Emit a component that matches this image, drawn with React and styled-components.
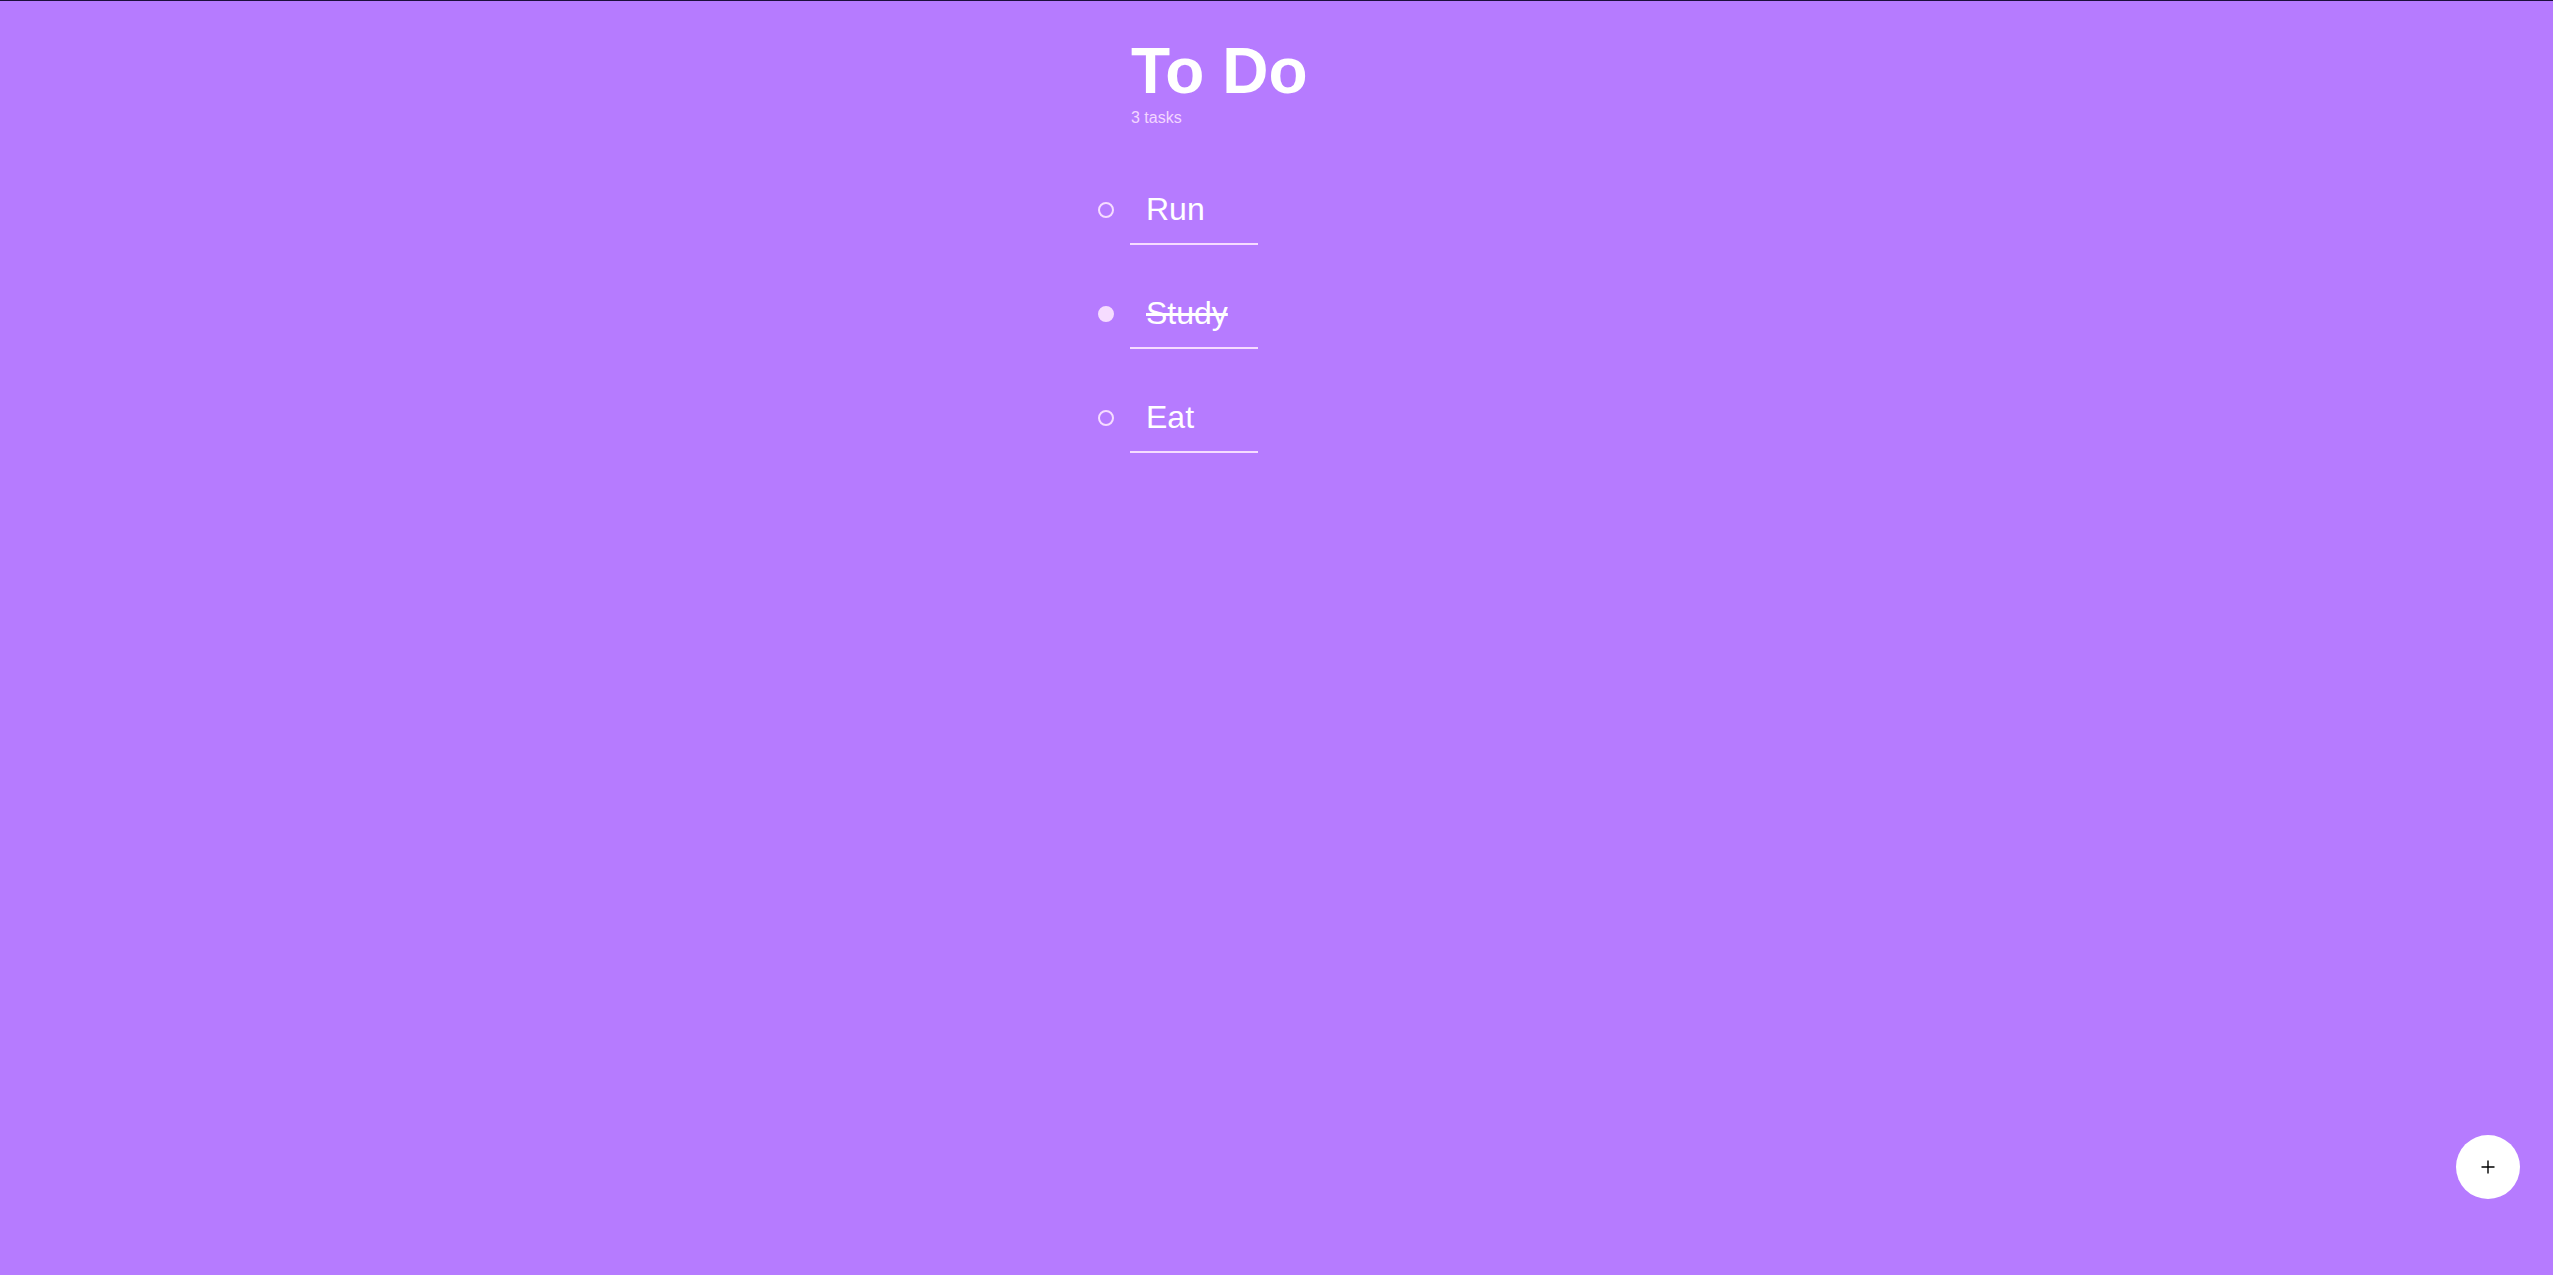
import React, { useState } from 'react';
import styled, { createGlobalStyle } from 'styled-components';

const GlobalStyle = createGlobalStyle`
  html, body {
    margin: 0;
    padding: 0;
    height: 100%;
    background: #b67bff;
  }
  body {
    border-top: 1px solid #1c0f3c;
    box-sizing: border-box;
    font-family: "Liberation Sans", Arial, sans-serif;
  }
  #root {
    min-height: 100%;
  }
`;

const Page = styled.div`
  min-height: 1274px;
  display: flex;
  justify-content: center;
  padding-right: 1px;
`;

const Column = styled.div`
  width: 356px;
  display: flex;
  flex-direction: column;
  padding-top: 33px;
`;

const Header = styled.header`
  padding-left: 33px;
  margin-bottom: 64px;
`;

const Title = styled.h1`
  margin: 0;
  font-size: 64px;
  line-height: 74px;
  font-weight: 700;
  color: #ffffff;
`;

const Count = styled.div`
  margin-top: 1px;
  font-size: 16px;
  line-height: 18px;
  color: #f3d6ff;
`;

const List = styled.ul`
  list-style: none;
  margin: 0;
  padding: 0;
  display: flex;
  flex-direction: column;
  gap: 50px;
`;

const Row = styled.li`
  display: flex;
  align-items: flex-start;
  gap: 16px;
`;

const Check = styled.button`
  width: 16px;
  height: 16px;
  margin-top: 11px;
  padding: 0;
  border-radius: 50%;
  border: 2px solid #f6dcff;
  background: ${p => (p.$done ? '#f6dcff' : 'transparent')};
  box-sizing: border-box;
  cursor: pointer;
  flex-shrink: 0;
`;

const TaskInput = styled.input`
  width: 128px;
  height: 54px;
  box-sizing: border-box;
  padding: 0 0 15px 16px;
  border: none;
  border-bottom: 2px solid #f6dcff;
  background: transparent;
  font-family: "Liberation Sans", Arial, sans-serif;
  font-size: 32px;
  line-height: 37px;
  color: #ffffff;
  outline: none;
  text-decoration: ${p => (p.$done ? 'line-through' : 'none')};
`;

const AddButton = styled.button`
  position: fixed;
  right: 33px;
  bottom: 76px;
  width: 64px;
  height: 64px;
  border-radius: 50%;
  border: none;
  background: #ffffff;
  display: flex;
  align-items: center;
  justify-content: center;
  cursor: pointer;
  padding: 0;
`;

const initial = [
  { id: 1, text: 'Run', done: false },
  { id: 2, text: 'Study', done: true },
  { id: 3, text: 'Eat', done: false },
];

export default function App() {
  const [tasks, setTasks] = useState(initial);

  const toggle = id =>
    setTasks(ts => ts.map(t => (t.id === id ? { ...t, done: !t.done } : t)));
  const edit = (id, text) =>
    setTasks(ts => ts.map(t => (t.id === id ? { ...t, text } : t)));
  const add = () =>
    setTasks(ts => [...ts, { id: Date.now(), text: '', done: false }]);

  return (
    <>
      <GlobalStyle />
      <Page>
        <Column>
          <Header>
            <Title>To Do</Title>
            <Count>{tasks.length} tasks</Count>
          </Header>
          <List>
            {tasks.map(t => (
              <Row key={t.id}>
                <Check $done={t.done} onClick={() => toggle(t.id)} aria-label="toggle" />
                <TaskInput
                  $done={t.done}
                  value={t.text}
                  onChange={e => edit(t.id, e.target.value)}
                />
              </Row>
            ))}
          </List>
        </Column>
      </Page>
      <AddButton onClick={add} aria-label="add task">
        <svg width="14" height="14" viewBox="0 0 14 14">
          <path d="M7 0.5V13.5M0.5 7H13.5" stroke="#000" strokeWidth="1.4" />
        </svg>
      </AddButton>
    </>
  );
}
